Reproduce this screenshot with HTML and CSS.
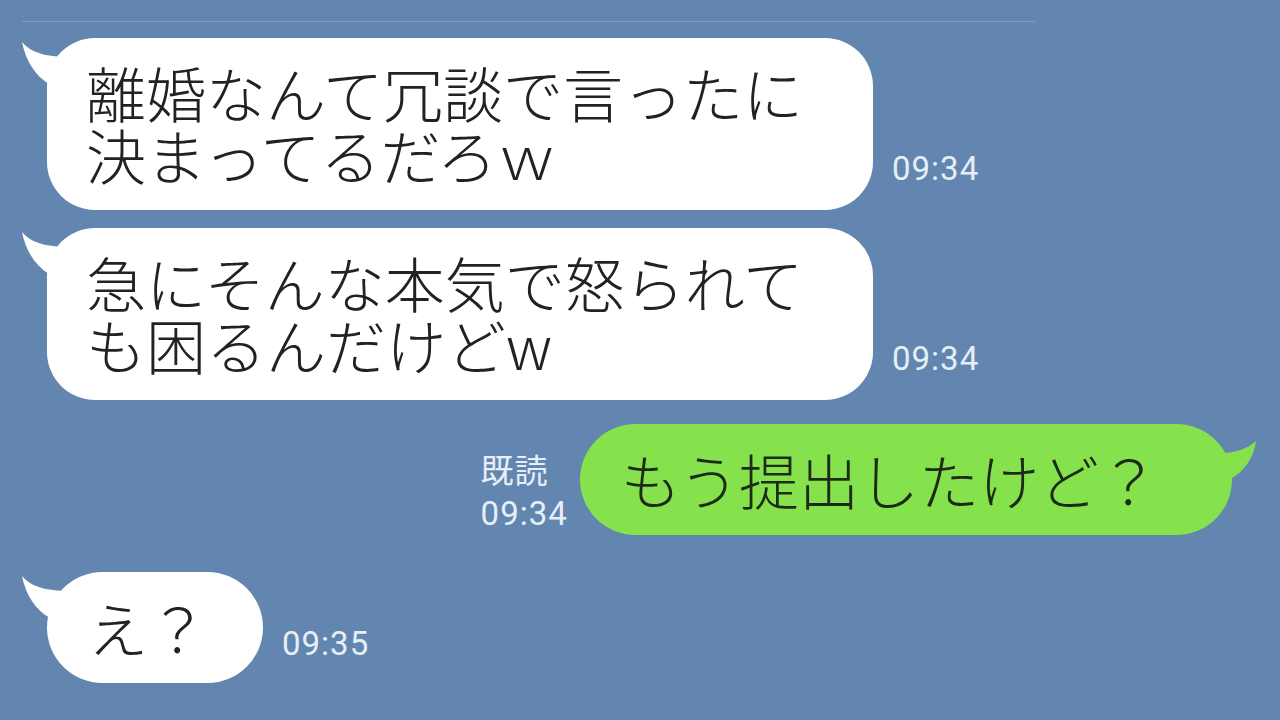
FILE: index.html
```html
<!DOCTYPE html>
<html lang="ja">
<head>
    <meta charset="UTF-8">
    <meta name="viewport" content="width=device-width, initial-scale=1.0">
    <title>トーク</title>
    <link rel="stylesheet" href="styles.css">
</head>
<body>
    <div class="chat">
        <div class="rule"></div>

        <div class="row">
            <div class="bubble bubble-in bubble-tall">
                <svg class="tail tail-in" width="50" height="58" viewBox="0 0 50 58">
                    <path d="M1 4 C9 14 24 19 49 19 L49 57 L28 57 L28 46 C15 38 5 24 1 4 Z"/>
                </svg>
                <p>離婚なんて冗談で言ったに<br>決まってるだろｗ</p>
            </div>
            <span class="time">09:34</span>
        </div>

        <div class="row">
            <div class="bubble bubble-in bubble-tall">
                <svg class="tail tail-in" width="50" height="58" viewBox="0 0 50 58">
                    <path d="M1 4 C9 14 24 19 49 19 L49 57 L28 57 L28 46 C15 38 5 24 1 4 Z"/>
                </svg>
                <p>急にそんな本気で怒られて<br>も困るんだけどw</p>
            </div>
            <span class="time">09:34</span>
        </div>

        <div class="row row-out">
            <div class="meta">
                <span>既読</span>
                <span>09:34</span>
            </div>
            <div class="bubble bubble-out">
                <svg class="tail tail-out" width="60" height="80" viewBox="0 0 60 80">
                    <path d="M54 17 C43 27 28 30 2 30 L2 76 L22 76 L22 58 C38 52 51 38 54 17 Z"/>
                </svg>
                <p>もう提出したけど？</p>
            </div>
        </div>

        <div class="row row-last">
            <div class="bubble bubble-in bubble-short">
                <svg class="tail tail-in" width="50" height="58" viewBox="0 0 50 58">
                    <path d="M1 4 C9 14 24 19 49 19 L49 57 L29 57 L29 46 C15 38 5 24 1 4 Z"/>
                </svg>
                <p>え？</p>
            </div>
            <span class="time time-mid">09:35</span>
        </div>
    </div>
</body>
</html>
```

FILE: styles.css
```css
html, body {
    margin: 0;
    padding: 0;
    width: 1280px;
    height: 720px;
    overflow: hidden;
    background: #6286b0;
}

.chat {
    display: flex;
    flex-direction: column;
    padding: 21px 48px 0 47px;
}

.rule {
    height: 1px;
    width: 1013px;
    margin: 0 0 16px -25px;
    background: #77a3bb;
}

.row {
    display: flex;
    align-items: flex-end;
    margin-bottom: 18px;
}

.row-out {
    justify-content: flex-end;
    margin-top: 6px;
    margin-bottom: 37px;
}

.bubble {
    position: relative;
    font-family: "Noto Sans CJK JP", sans-serif;
    font-weight: 300;
    font-size: 60px;
    line-height: 62px;
    color: #222;
}

.bubble p {
    position: relative;
    margin: 0;
    white-space: nowrap;
}

.bubble-in {
    background: #fff;
    padding: 23px 70px 25px 39px;
    border-radius: 48px;
}

.bubble-short {
    padding: 24px 55px 25px 41px;
    border-radius: 56px;
}

.bubble-out {
    background: #86e24c;
    color: #1d2a16;
    padding: 24px 73px 25px 41px;
    border-radius: 56px;
}

.tail {
    position: absolute;
    top: 0;
}

.tail-in {
    left: -26px;
    fill: #fff;
}

.tail-out {
    right: -30px;
    fill: #86e24c;
}

.time {
    font-family: Roboto, "Noto Sans", sans-serif;
    font-size: 33px;
    line-height: 33px;
    letter-spacing: 1px;
    color: #e6eef7;
    margin: 0 0 25px 19px;
}

.time-mid {
    margin-left: 19px;
    margin-bottom: 23px;
}

.meta {
    display: flex;
    flex-direction: column;
    margin-right: 12px;
    font-family: Roboto, "Noto Sans CJK JP", sans-serif;
    font-size: 33px;
    line-height: 42px;
    letter-spacing: 1px;
    color: #e6eef7;
}
```
